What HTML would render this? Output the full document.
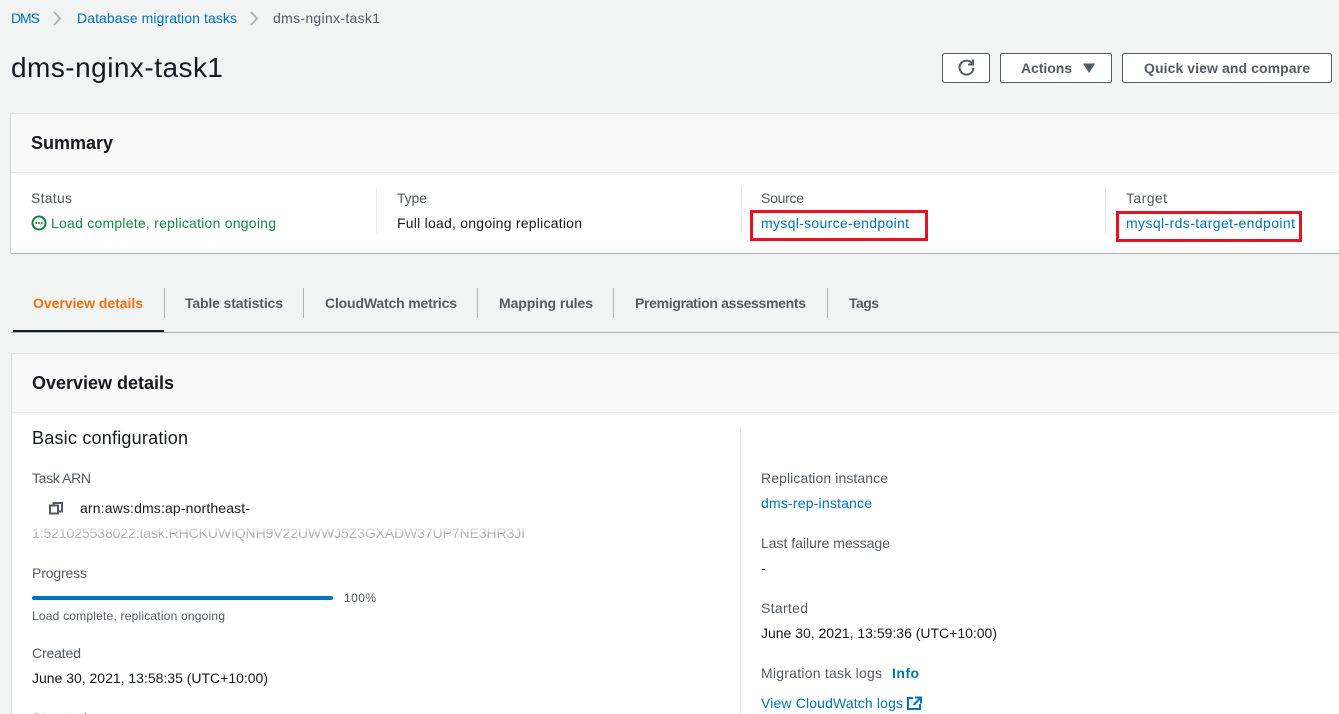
<!DOCTYPE html>
<html lang="en">
<head>
<meta charset="utf-8">
<title>dms-nginx-task1</title>
<style>
html,body{margin:0;padding:0;width:1339px;height:714px;overflow:hidden;background:#f2f3f3}
svg{display:block}
text{font-family:"Liberation Sans",sans-serif;font-size:14px;fill:#16191f;white-space:pre}
.l{fill:#545b64}
.a{fill:#0073bb}
.b{font-weight:700}
.t{font-weight:700;fill:#545b64}
</style>
</head>
<body>
<svg width="1339" height="714" viewBox="0 0 1339 714" xmlns="http://www.w3.org/2000/svg">
<rect width="1339" height="714" fill="#f2f3f3"/>

<!-- breadcrumb -->
<text class="a" x="11" y="23" textLength="29">DMS</text>
<path d="M54 12l6 6.500-6 6.500" fill="none" stroke="#aab7b8" stroke-width="2"/>
<text class="a" x="77" y="23" textLength="160">Database migration tasks</text>
<path d="M251 12l6 6.500-6 6.500" fill="none" stroke="#aab7b8" stroke-width="2"/>
<text class="l" x="273" y="23" textLength="107">dms-nginx-task1</text>

<!-- title -->
<text x="11" y="77" textLength="212" style="font-size:28px">dms-nginx-task1</text>

<!-- buttons -->
<rect x="942.500" y="53.500" width="47" height="29" rx="2" fill="#fff" stroke="#545b64"/>
<path d="M972.200 63.500A7 7 0 1 0 973.500 68" fill="none" stroke="#545b64" stroke-width="2"/>
<path d="M973 59.500v5h-5" fill="none" stroke="#545b64" stroke-width="2"/>
<rect x="1000.500" y="53.500" width="111" height="29" rx="2" fill="#fff" stroke="#545b64"/>
<text class="t" x="1021" y="73" textLength="51">Actions</text>
<path d="M1083 63.500h12l-6 9.500z" fill="#545b64"/>
<rect x="1122.500" y="53.500" width="209" height="29" rx="2" fill="#fff" stroke="#545b64"/>
<text class="t" x="1144" y="73" textLength="166">Quick view and compare</text>

<!-- summary card -->
<rect x="11" y="113" width="1328" height="140" fill="#fff"/>
<rect x="11" y="113" width="1328" height="59" fill="#fafafa"/>
<rect x="11" y="113" width="1328" height="1" fill="#e4e7e7"/>
<rect x="11" y="172" width="1328" height="1" fill="#eaeded"/>
<rect x="10" y="113" width="1" height="140" fill="#d5dbdb"/>
<rect x="11" y="253" width="1328" height="1" fill="#aab7b8"/>
<text x="31" y="149" textLength="82" class="b" style="font-size:18px">Summary</text>

<rect x="376" y="188" width="1" height="45" fill="#eaeded"/>
<rect x="741" y="188" width="1" height="45" fill="#eaeded"/>
<rect x="1105" y="188" width="1" height="45" fill="#eaeded"/>

<text class="l" x="31" y="203" textLength="41">Status</text>
<circle cx="39" cy="223" r="6.500" fill="none" stroke="#0f8a3a" stroke-width="2"/>
<path d="M35.500 222h1.600v2h-1.600zM38.200 222h1.600v2h-1.600zM40.900 222h1.600v2h-1.600z" fill="#0f8a3a"/>
<text x="51" y="228" textLength="225" style="fill:#168a3e">Load complete, replication ongoing</text>

<text class="l" x="397" y="203" textLength="30">Type</text>
<text x="397" y="228" textLength="185">Full load, ongoing replication</text>

<text class="l" x="761" y="203" textLength="43">Source</text>
<text class="a" x="761" y="228" textLength="148">mysql-source-endpoint</text>
<rect x="751.500" y="211.500" width="175" height="28" fill="none" stroke="#e81123" stroke-width="3"/>

<text class="l" x="1126" y="203" textLength="41">Target</text>
<text class="a" x="1126" y="228" textLength="169">mysql-rds-target-endpoint</text>
<rect x="1117.500" y="212.500" width="183" height="28" fill="none" stroke="#e81123" stroke-width="3"/>

<!-- tabs -->
<rect x="11" y="332" width="1328" height="1" fill="#aab7b8"/>
<rect x="13" y="330" width="151" height="2" fill="#16191f"/>
<text class="b" x="33" y="308" textLength="110" style="fill:#ec7211">Overview details</text>
<rect x="164" y="288" width="1" height="30" fill="#aab7b8"/>
<text class="t" x="185" y="308" textLength="98">Table statistics</text>
<rect x="303" y="288" width="1" height="30" fill="#aab7b8"/>
<text class="t" x="325" y="308" textLength="132">CloudWatch metrics</text>
<rect x="477" y="288" width="1" height="30" fill="#aab7b8"/>
<text class="t" x="499" y="308" textLength="94">Mapping rules</text>
<rect x="613" y="288" width="1" height="30" fill="#aab7b8"/>
<text class="t" x="635" y="308" textLength="171">Premigration assessments</text>
<rect x="827" y="288" width="1" height="30" fill="#aab7b8"/>
<text class="t" x="849" y="308" textLength="30">Tags</text>

<!-- overview card -->
<rect x="12" y="353" width="1327" height="361" fill="#fff"/>
<rect x="12" y="353" width="1327" height="59" fill="#fafafa"/>
<rect x="12" y="353" width="1327" height="1" fill="#e4e7e7"/>
<rect x="12" y="412" width="1327" height="1" fill="#eaeded"/>
<rect x="11" y="353" width="1" height="361" fill="#d5dbdb"/>
<text x="32" y="389" textLength="142" class="b" style="font-size:18px">Overview details</text>
<rect x="740" y="428" width="1" height="286" fill="#eaeded"/>

<!-- left column -->
<text x="32" y="444" textLength="156" style="font-size:18px">Basic configuration</text>
<text class="l" x="32" y="483" textLength="59">Task ARN</text>
<rect x="50" y="505.500" width="8" height="8" fill="none" stroke="#545b64" stroke-width="2"/>
<path d="M53.500 505V503h8.500v8.500h-3" fill="none" stroke="#545b64" stroke-width="2"/>
<text x="80" y="513" textLength="170">arn:aws:dms:ap-northeast-</text>
<text x="32" y="538" textLength="493" style="fill:#5c6166">1:521025538022:task:RHCKUWIQNH9V22UWWJ5Z3GXADW37UP7NE3HR3JI</text>
<rect x="30" y="524" width="500" height="8" fill="#fff" opacity=".72"/>
<rect x="30" y="532" width="500" height="4" fill="#fff" opacity=".5"/>
<rect x="30" y="536" width="500" height="4" fill="#fff" opacity=".55"/>
<text class="l" x="32" y="578" textLength="55">Progress</text>
<rect x="32" y="596" width="301" height="4" rx="2" fill="#0073bb"/>
<text class="l" x="344" y="602" textLength="32" style="font-size:12px">100%</text>
<text class="l" x="32" y="620" textLength="193" style="font-size:12px">Load complete, replication ongoing</text>
<text class="l" x="32" y="658" textLength="49">Created</text>
<text x="32" y="683" textLength="236">June 30, 2021, 13:58:35 (UTC+10:00)</text>
<text class="l" x="32" y="723" textLength="55">Started</text>

<!-- right column -->
<text class="l" x="761" y="483" textLength="127">Replication instance</text>
<text class="a" x="761" y="508" textLength="111">dms-rep-instance</text>
<text class="l" x="761" y="548" textLength="129">Last failure message</text>
<text x="761" y="573">-</text>
<text class="l" x="761" y="613" textLength="47">Started</text>
<text x="761" y="638" textLength="236">June 30, 2021, 13:59:36 (UTC+10:00)</text>
<text class="l" x="761" y="678" textLength="121">Migration task logs</text>
<text class="a b" x="892" y="678" textLength="27">Info</text>
<text class="a" x="761" y="708" textLength="142">View CloudWatch logs</text>
<path d="M913 698h-5v11h12v-5" fill="none" stroke="#0073bb" stroke-width="2"/>
<path d="M915 697.500h6v6M920.500 698l-7 7" fill="none" stroke="#0073bb" stroke-width="2"/>
</svg>
</body>
</html>
